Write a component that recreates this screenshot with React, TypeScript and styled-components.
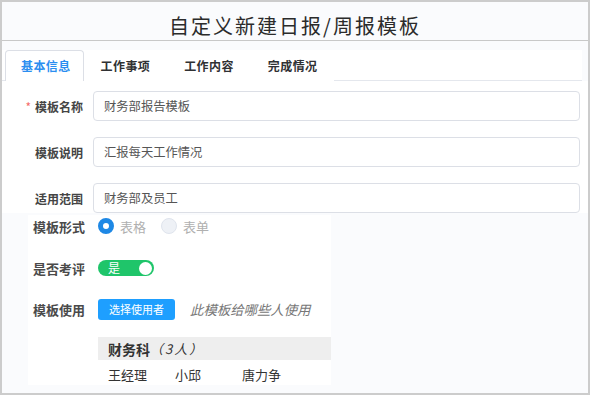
import styled, { createGlobalStyle } from 'styled-components';

const GlobalStyle = createGlobalStyle`
  html, body {
    margin: 0;
    padding: 0;
    background: #ffffff;
  }
  * {
    box-sizing: border-box;
  }
  body {
    font-family: "Noto Sans CJK SC", "Noto Sans", sans-serif;
  }
`;

const tabs = ['基本信息', '工作事项', '工作内容', '完成情况'];
const fields = [
  { label: '模板名称', value: '财务部报告模板', required: true },
  { label: '模板说明', value: '汇报每天工作情况', required: false },
  { label: '适用范围', value: '财务部及员工', required: false },
];
const members = ['王经理', '小邱', '唐力争'];

function App() {
  return (
    <Frame>
      <GlobalStyle />
      <Header>自定义新建日报/周报模板</Header>
      <TabBar>
        {tabs.map((t, i) => (
          <Tab key={t} $active={i === 0}>
            {t}
          </Tab>
        ))}
      </TabBar>
      <Form>
        {fields.map((f) => (
          <FieldRow key={f.label}>
            <FieldLabel>
              {f.required && <Star>*</Star>}
              {f.label}
            </FieldLabel>
            <TextInput readOnly value={f.value} />
          </FieldRow>
        ))}
      </Form>
      <Panel>
        <PanelRow>
          <PanelLabel>模板形式</PanelLabel>
          <RadioGroup>
            <RadioItem>
              <RadioDot $checked />
              <RadioText>表格</RadioText>
            </RadioItem>
            <RadioItem>
              <RadioDot />
              <RadioText>表单</RadioText>
            </RadioItem>
          </RadioGroup>
        </PanelRow>
        <PanelRow $top={20}>
          <PanelLabel>是否考评</PanelLabel>
          <Switch>
            <SwitchText>是</SwitchText>
            <Knob />
          </Switch>
        </PanelRow>
        <PanelRow $top={19}>
          <PanelLabel>模板使用</PanelLabel>
          <PickButton>选择使用者</PickButton>
          <Hint>此模板给哪些人使用</Hint>
        </PanelRow>
        <Group>
          <GroupHead>
            财务科<GroupCount>（3人）</GroupCount>
          </GroupHead>
          <Members>
            {members.map((m) => (
              <Member key={m}>{m}</Member>
            ))}
          </Members>
        </Group>
      </Panel>
    </Frame>
  );
}

export default App;

const Frame = styled.div`
  width: 590px;
  height: 395px;
  border: 2px solid #cccccc;
  background: #fafbfd;
  overflow: hidden;
`;
const Header = styled.div`
  height: 39px;
  border-bottom: 1px solid #c8c8c8;
  display: flex;
  align-items: center;
  justify-content: center;
  font-size: 20px;
  letter-spacing: 2px;
  color: #2b2b2b;
  padding-top: 9px;
`;
const TabBar = styled.div`
  display: flex;
  margin: 9px 6px 0 0;
  padding-left: 3px;
  border-bottom: 1px solid #e4e7ed;
  background: #ffffff;
`;
const Tab = styled.div<{ $active?: boolean }>`
  height: 31px;
  line-height: 29px;
  font-size: 12px;
  letter-spacing: 0.4px;
  font-weight: 700;
  padding: ${({ $active }) => ($active ? '0 12px 0 15px' : '0 16px')};
  color: ${({ $active }) => ($active ? '#2b8ef0' : '#303133')};
  border: 1px solid ${({ $active }) => ($active ? '#dcdfe6' : 'transparent')};
  border-bottom: none;
  border-radius: 4px 4px 0 0;
  background: #ffffff;
  margin-bottom: -1px;
`;
const Form = styled.div`
  display: flex;
  flex-direction: column;
  gap: 16px;
  padding: 10px 8px 0 0;
  background: #ffffff;
`;
const FieldRow = styled.div`
  display: flex;
  align-items: center;
  gap: 10px;
`;
const FieldLabel = styled.div`
  width: 81px;
  text-align: right;
  font-size: 12px;
  font-weight: 700;
  color: #444;
`;
const Star = styled.span`
  color: #f56c6c;
  margin-right: 4px;
  font-weight: 400;
`;
const TextInput = styled.input`
  flex: 1;
  height: 30px;
  border: 1px solid #dcdfe6;
  border-radius: 4px;
  background: #ffffff;
  padding: 0 10px;
  font-family: inherit;
  font-size: 12.3px;
  color: #555;
  outline: none;
`;
const Panel = styled.div`
  width: 303px;
  height: 170px;
  margin: 2px 0 0 26px;
  background: #ffffff;
  display: flex;
  flex-direction: column;
`;
const PanelRow = styled.div<{ $top?: number }>`
  display: flex;
  align-items: center;
  height: 22px;
  margin-top: ${({ $top }) => $top ?? 0}px;
  padding-left: 5px;
`;
const PanelLabel = styled.div`
  width: 65px;
  font-size: 13px;
  font-weight: 700;
  color: #4a4a4a;
`;
const RadioGroup = styled.div`
  display: flex;
  gap: 15px;
`;
const RadioItem = styled.div`
  display: flex;
  align-items: center;
  gap: 6px;
`;
const RadioDot = styled.span<{ $checked?: boolean }>`
  width: 16px;
  height: 16px;
  border-radius: 50%;
  background: ${({ $checked }) => ($checked ? '#ffffff' : '#eef1f6')};
  border: ${({ $checked }) => ($checked ? '5px solid #1e88e5' : '1px solid #dfe4ed')};
`;
const RadioText = styled.span`
  font-size: 13px;
  color: #b0b0b0;
`;
const Switch = styled.div`
  width: 56px;
  height: 16px;
  border-radius: 8px;
  background: #1fc56a;
  display: flex;
  align-items: center;
  justify-content: space-between;
  padding: 0 2px 0 10px;
`;
const SwitchText = styled.span`
  font-size: 12px;
  color: #ffffff;
  line-height: 16px;
`;
const Knob = styled.span`
  width: 13px;
  height: 13px;
  border-radius: 50%;
  background: #ffffff;
`;
const PickButton = styled.button`
  width: 77px;
  height: 21px;
  border: none;
  border-radius: 3px;
  background: #1e9fff;
  color: #ffffff;
  font-family: inherit;
  font-size: 11px;
  padding: 0;
`;
const Hint = styled.span`
  margin-left: 15px;
  font-size: 13.4px;
  font-style: italic;
  color: #777;
`;
const Group = styled.div`
  margin: 17px 0 0 70px;
  display: flex;
  flex-direction: column;
`;
const GroupHead = styled.div`
  height: 23px;
  background: #eeeeee;
  padding-left: 10px;
  display: flex;
  align-items: center;
  font-size: 14px;
  font-weight: 700;
  color: #333;
`;
const GroupCount = styled.span`
  font-style: italic;
  font-weight: 400;
  font-size: 13px;
  letter-spacing: 2px;
`;
const Members = styled.div`
  display: flex;
  padding: 5px 0 0 10px;
  font-size: 13px;
  color: #333;
`;
const Member = styled.span`
  width: 67px;
`;
